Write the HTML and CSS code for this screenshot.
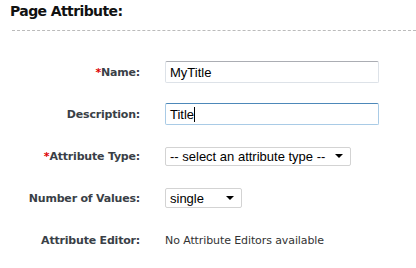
FILE: index.html
```html
<!DOCTYPE html>
<html lang="en">
<head>
  <meta charset="UTF-8" />
  <title>Page Attribute</title>
  <link rel="stylesheet" href="styles.css">
</head>
<body>
  <div class="section-title">Page Attribute:</div>
  <div class="divider"></div>

  <div class="form">
    <div class="row">
      <label class="label"><span class="req">*</span>Name:</label>
      <input class="text" type="text" value="MyTitle">
    </div>
    <div class="row">
      <label class="label">Description:</label>
      <div class="text focused">Title<span class="caret"></span></div>
    </div>
    <div class="row">
      <label class="label"><span class="req">*</span>Attribute Type:</label>
      <div class="select type-select">
        <span>-- select an attribute type --</span>
        <svg class="arrow" width="8" height="4" viewBox="0 0 8 4"><path d="M0 0h8L4 4z" fill="#000"/></svg>
      </div>
    </div>
    <div class="row">
      <label class="label">Number of Values:</label>
      <div class="select count-select">
        <span>single</span>
        <svg class="arrow" width="8" height="4" viewBox="0 0 8 4"><path d="M0 0h8L4 4z" fill="#000"/></svg>
      </div>
    </div>
    <div class="row">
      <label class="label">Attribute Editor:</label>
      <div class="plain">No Attribute Editors available</div>
    </div>
  </div>
</body>
</html>
```

FILE: styles.css
```css
body {
  margin: 0;
  background: #fff;
  font-family: "DejaVu Sans", Verdana, sans-serif;
  color: #333;
}

.section-title {
  font-weight: bold;
  font-size: 14px;
  letter-spacing: -0.6px;
  color: #111;
  padding: 3px 0 0 10px;
  height: 23px;
}

.divider {
  margin: 4px 0 0 12px;
  border-top: 1px dashed #bbb;
}

.form {
  margin-top: 20px;
}

.row {
  display: flex;
  align-items: center;
  height: 42px;
}

.label {
  width: 140px;
  margin-right: 25px;
  text-align: right;
  font-weight: bold;
  font-size: 11px;
  letter-spacing: -0.2px;
  color: #3a3f47;
}

.req {
  color: #d00;
}

.text {
  box-sizing: border-box;
  width: 214px;
  height: 22px;
  margin: 0;
  padding: 0 4px;
  border: 1px solid #dde2e8;
  border-top-color: #abadb3;
  border-radius: 2px;
  font-family: "Liberation Sans", Arial, sans-serif;
  font-size: 13px;
  color: #000;
  display: flex;
  align-items: center;
  outline: none;
}

.focused {
  border-color: #a9cbe6;
  border-top-color: #4d88b9;
}

.caret {
  display: inline-block;
  width: 1px;
  height: 15px;
  background: #000;
}

.select {
  box-sizing: border-box;
  display: flex;
  align-items: center;
  justify-content: space-between;
  height: 19px;
  padding: 0 7px 0 4px;
  border: 1px solid #d3d3d3;
  border-radius: 2px;
  font-family: "Liberation Sans", Arial, sans-serif;
  font-size: 13px;
  color: #000;
}

.type-select {
  width: 186px;
}

.count-select {
  width: 77px;
  height: 20px;
}

.plain {
  font-size: 11px;
  letter-spacing: -0.1px;
  color: #333;
}
```
